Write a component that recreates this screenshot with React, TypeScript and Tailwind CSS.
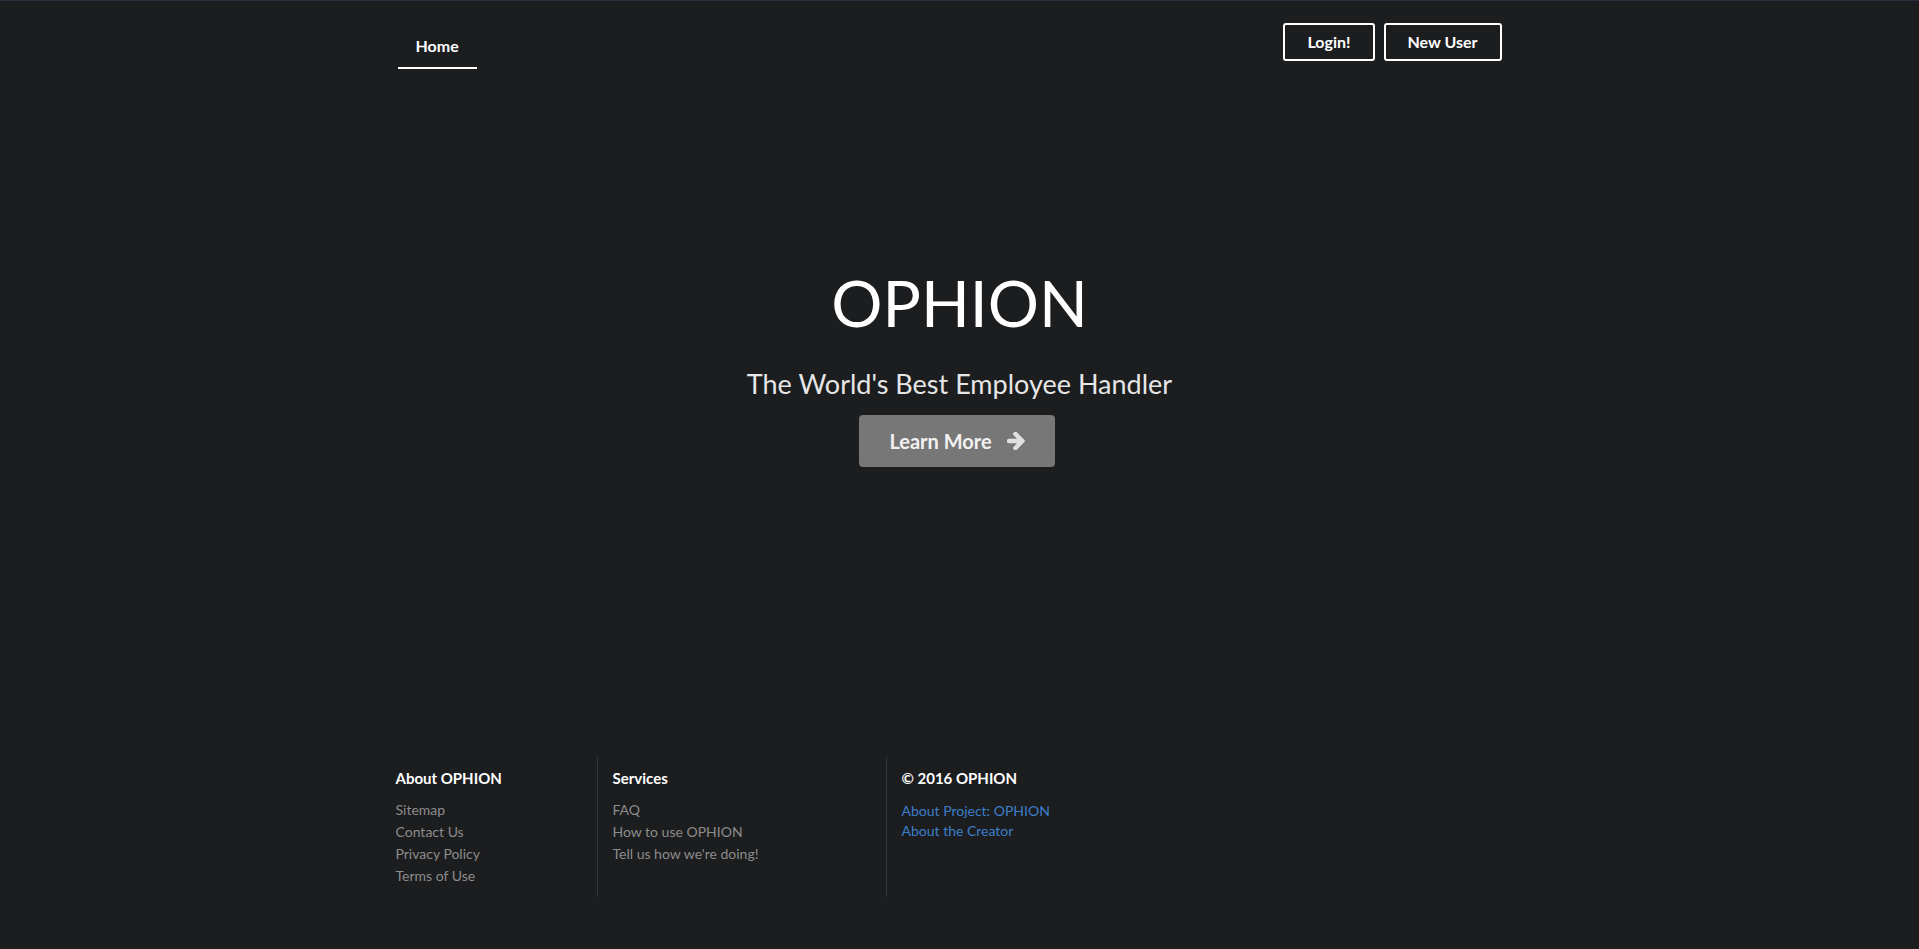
export default function App() {
  return (
    <div
      className="flex min-h-screen flex-col border-t border-[#2c2d3c] bg-[#1c1d1f] text-white"
      style={{ fontFamily: "Lato, 'Open Sans', sans-serif" }}
    >
      {/* Nav */}
      <nav className="mx-auto flex w-[1170px] items-start justify-between">
        <a className="ml-[23px] block border-b-2 border-white px-[18px] pt-[35px] pb-[11px] text-[16px] font-bold leading-5">
          Home
        </a>
        <div className="mr-[43px] mt-[22px] flex gap-[9px]">
          <button className="rounded-[3px] border-2 border-white px-[22px] py-[7px] text-[16px] font-bold leading-5">
            Login!
          </button>
          <button className="rounded-[3px] border-2 border-white px-[22px] py-[7px] text-[16px] font-bold leading-5">
            New User
          </button>
        </div>
      </nav>

      {/* Hero */}
      <section className="mt-[202px] flex flex-col items-center">
        <h1 className="text-[64px] leading-none font-normal">OPHION</h1>
        <p className="mt-[35px] text-[27px] leading-none text-[#e6e6e6]">
          The World's Best Employee Handler
        </p>
        <button className="mt-[18px] mr-[5px] flex h-[52px] items-center gap-[15px] rounded-[4px] bg-[#777777] px-[30px] text-[20px] font-bold text-[#f2f2f2]">
          Learn More
          <svg viewBox="128 218 1472 1484" className="h-[18px] w-[18px] fill-[#e0e0e0]">
            <path d="M1600 960q0 54-37 91l-651 651q-39 37-91 37-51 0-90-37l-75-75q-38-38-38-91t38-91l293-293h-704q-52 0-84.5-37.5t-32.5-90.5v-128q0-53 32.5-90.5t84.5-37.5h704l-293-294q-38-36-38-90t38-90l75-75q38-38 90-38 53 0 91 38l651 651q37 35 37 90z" />
          </svg>
        </button>
      </section>

      {/* Footer */}
      <footer className="mx-auto mt-auto mb-[52px] flex w-[1170px]">
        <div className="w-[222px] pl-[21px] pt-[11px] pb-[10px]">
          <h4 className="text-[15px] font-bold leading-5">About OPHION</h4>
          <ul className="mt-[11px] text-[14px] leading-[22px] text-[#8c8c8c]">
            <li>Sitemap</li>
            <li>Contact Us</li>
            <li>Privacy Policy</li>
            <li>Terms of Use</li>
          </ul>
        </div>
        <div className="w-[289px] border-l border-[#35363a] pl-[15px] pt-[11px]">
          <h4 className="text-[15px] font-bold leading-5">Services</h4>
          <ul className="mt-[11px] text-[14px] leading-[22px] text-[#8c8c8c]">
            <li>FAQ</li>
            <li>How to use OPHION</li>
            <li>Tell us how we're doing!</li>
          </ul>
        </div>
        <div className="border-l border-[#35363a] pl-[15px] pt-[11px]">
          <h4 className="text-[15px] font-bold leading-5">© 2016 OPHION</h4>
          <ul className="mt-[13px] text-[14px] leading-5 text-[#3b7fcb]">
            <li>About Project: OPHION</li>
            <li>About the Creator</li>
          </ul>
        </div>
      </footer>
    </div>
  );
}
